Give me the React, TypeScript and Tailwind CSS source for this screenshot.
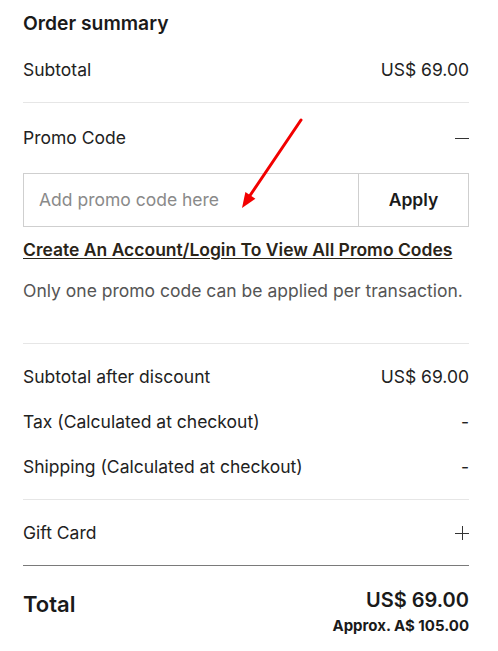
import React from 'react';

const Row: React.FC<{ label: string; value: string }> = ({ label, value }) => (
  <div className="h-[45px] flex items-center justify-between text-[17.5px] text-[#222]">
    <span>{label}</span>
    <span>{value}</span>
  </div>
);

const App: React.FC = () => {
  return (
    <div className="relative min-h-[651px] bg-white font-['Inter',sans-serif] text-[#222]">
      <div className="pl-[23px] pr-[29px]">
        <div className="h-[44px] flex items-center pt-[2px]">
          <h2 className="text-[19.3px] font-semibold text-[#1a1a1a]">Order summary</h2>
        </div>

        <div className="h-[52px] flex items-center justify-between text-[17.5px]">
          <span>Subtotal</span>
          <span>US$ 69.00</span>
        </div>

        <div className="mt-[6px] border-t border-[#e6e6e6]" />

        <div className="h-[70px] flex items-center justify-between text-[17.5px] pt-[1px]">
          <span>Promo Code</span>
          <span className="block w-[14px] h-px bg-[#333]" />
        </div>

        <div className="flex h-[54px] border border-[#cfcfcf]">
          <input
            className="flex-1 min-w-0 px-[15px] text-[17.5px] text-[#222] placeholder:text-[#8a8a8a] outline-none bg-transparent"
            placeholder="Add promo code here"
          />
          <button className="w-[110px] border-l border-[#cfcfcf] text-[17.5px] font-semibold text-[#1a1a1a]">
            Apply
          </button>
        </div>

        <div className="h-[46px] flex items-center">
          <a href="#" className="text-[17.5px] font-semibold text-[#2a2418] underline underline-offset-2">
            Create An Account/Login To View All Promo Codes
          </a>
        </div>

        <div className="h-[36px] flex items-center text-[17.5px] text-[#555]">
          Only one promo code can be applied per transaction.
        </div>

        <div className="mt-[34px] border-t border-[#e6e6e6]" />

        <div className="pt-[11px]">
          <Row label="Subtotal after discount" value="US$ 69.00" />
          <Row label="Tax (Calculated at checkout)" value="-" />
          <Row label="Shipping (Calculated at checkout)" value="-" />
        </div>

        <div className="mt-[9px] border-t border-[#e6e6e6]" />

        <div className="h-[65px] flex items-center justify-between text-[17.5px] pt-[1px]">
          <span>Gift Card</span>
          <span className="relative block w-[14px] h-[14px]">
            <span className="absolute left-0 top-[6.5px] w-[14px] h-px bg-[#333]" />
            <span className="absolute top-0 left-[6.5px] h-[14px] w-px bg-[#333]" />
          </span>
        </div>

        <div className="border-t border-[#7a7a7a]" />

        <div className="pt-[20px] flex justify-between">
          <span className="mt-[4px] text-[22px] leading-[28px] font-semibold text-[#1a1a1a]">Total</span>
          <div className="flex flex-col items-end">
            <span className="text-[20px] leading-[28px] font-semibold text-[#1a1a1a]">US$ 69.00</span>
            <span className="mt-[2px] text-[15px] leading-[20px] font-bold text-[#1a1a1a]">Approx. A$ 105.00</span>
          </div>
        </div>
      </div>

      <svg className="absolute left-0 top-0 pointer-events-none" width="498" height="651">
        <line x1="301" y1="120" x2="249" y2="197" stroke="#f20000" strokeWidth="3" strokeLinecap="round" />
        <polygon points="242,208 255.4,198.8 245.4,192.1" fill="#f20000" />
      </svg>
    </div>
  );
};

export default App;
